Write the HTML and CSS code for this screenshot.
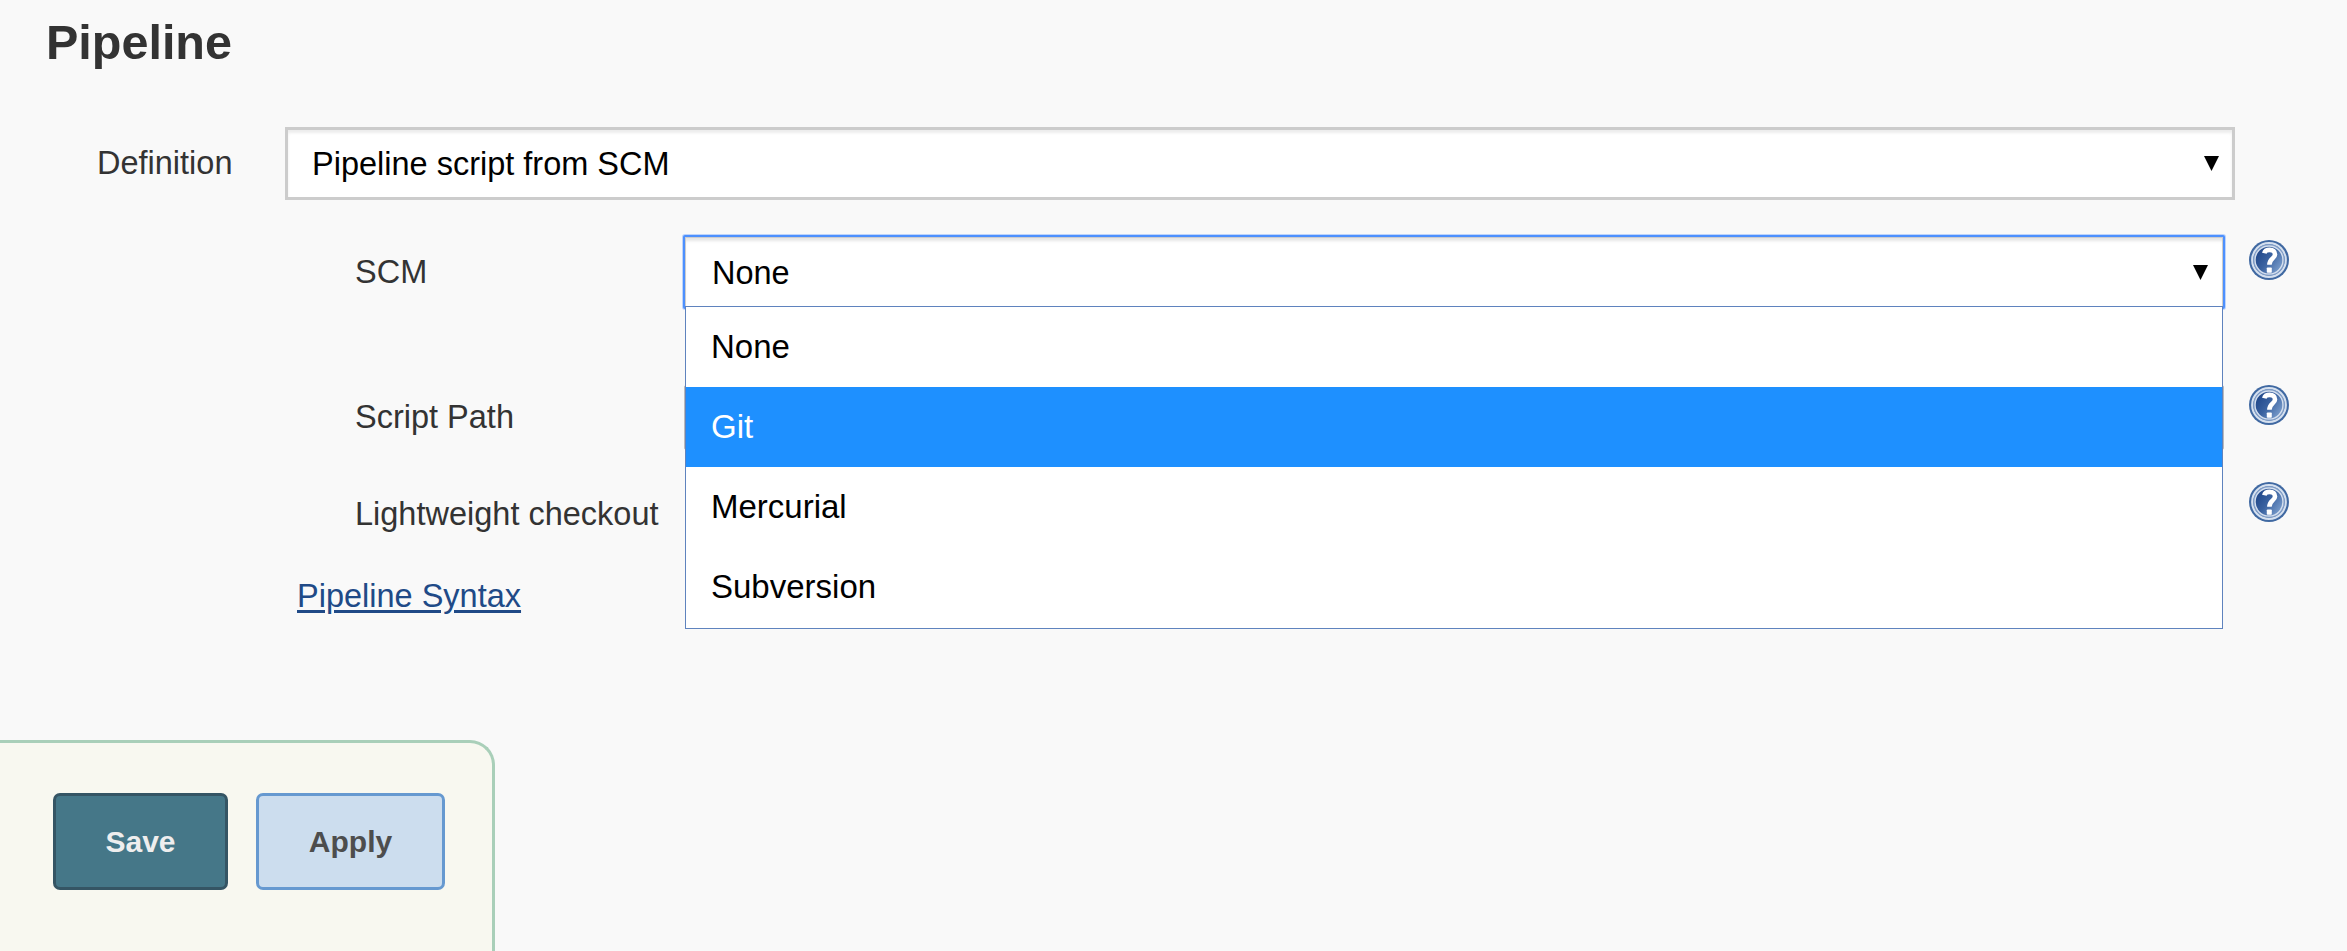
FILE: index.html
```html
<!DOCTYPE html>
<html lang="en">
<head>
<meta charset="utf-8">
<title>Pipeline</title>
<link rel="stylesheet" href="styles.css">
</head>
<body>
<svg class="defs" width="0" height="0" aria-hidden="true">
  <defs>
    <linearGradient id="ball" x1="0" y1="0.2" x2="1" y2="0.9">
      <stop offset="0" stop-color="#1d4487"/>
      <stop offset="0.45" stop-color="#3a62a0"/>
      <stop offset="1" stop-color="#86a8d4"/>
    </linearGradient>
    <symbol id="help" viewBox="0 0 40 40">
      <circle cx="20" cy="20" r="20" fill="#4069a2"/>
      <circle cx="20" cy="20" r="16.8" fill="none" stroke="#d5e0ef" stroke-width="2.2"/>
      <circle cx="20" cy="20" r="15.2" fill="none" stroke="#7f9cc6" stroke-width="1.4"/>
      <circle cx="20" cy="20" r="14" fill="url(#ball)" stroke="#d5e0ef" stroke-width="1.4"/>
      <path d="M15.3 13.2C15.8 10.8 18 9.9 20.8 9.9C24 9.9 26 11.6 26 14.4C26 18.6 20.4 18.4 20.4 24.8" fill="none" stroke="#fff" stroke-width="4.6"/>
      <rect x="17.8" y="27.4" width="5" height="5.4" rx="0.8" fill="#fff"/>
    </symbol>
  </defs>
</svg>
<main class="page">
  <h1 class="title">Pipeline</h1>
  <form class="form">
    <div class="row definition">
      <label class="label">Definition</label>
      <div class="select">
        <span>Pipeline script from SCM</span>
        <svg class="arrow" viewBox="0 0 15 15"><path d="M0 0H15L7.5 15Z"/></svg>
      </div>
    </div>
    <div class="row scm">
      <label class="label nested">SCM</label>
      <div class="field">
        <div class="select focused">
          <span>None</span>
          <svg class="arrow" viewBox="0 0 15 15"><path d="M0 0H15L7.5 15Z"/></svg>
        </div>
        <ul class="menu">
          <li class="option">None</li>
          <li class="option active">Git</li>
          <li class="option">Mercurial</li>
          <li class="option">Subversion</li>
        </ul>
      </div>
      <svg class="help"><use href="#help"/></svg>
    </div>
    <div class="row script-path">
      <label class="label nested">Script Path</label>
      <div class="textbox"></div>
      <svg class="help"><use href="#help"/></svg>
    </div>
    <div class="row lightweight">
      <label class="label nested">Lightweight checkout</label>
      <div class="spacer"></div>
      <svg class="help"><use href="#help"/></svg>
    </div>
    <a class="link">Pipeline Syntax</a>
  </form>
  <footer class="actions">
    <button class="btn save">Save</button>
    <button class="btn apply">Apply</button>
  </footer>
</main>
</body>
</html>
```

FILE: styles.css
```css
* { box-sizing: border-box; }
body {
  margin: 0;
  background: #f9f9f9;
  color: #333;
  font: 32.5px/40px "Liberation Sans", Arial, sans-serif;
}
.defs { position: absolute; }
.page {
  display: flex;
  flex-direction: column;
  width: 2347px;
  height: 951px;
  overflow: hidden;
}
.title {
  flex: none;
  margin: 0;
  padding: 12px 0 0 46px;
  height: 127px;
  font-size: 48.5px;
  line-height: 60px;
  font-weight: bold;
}
.form { display: flex; flex-direction: column; flex: none; height: 613px; }
.row { display: flex; align-items: flex-start; flex: none; }
.label { width: 285px; padding: 16px 0 0 97px; white-space: nowrap; flex: none; }
.label.nested { width: 683px; padding: 17px 0 0 355px; }
.definition { height: 108px; }
.scm { height: 150px; }
.script-path { height: 97px; }
.lightweight { height: 94px; }
.script-path .label, .lightweight .label { padding-top: 12px; }
.select {
  display: flex;
  align-items: flex-start;
  justify-content: space-between;
  width: 1950px;
  height: 73px;
  padding: 14px 13px 0 24px;
  border: 3px solid #ccc;
  background: #fff;
  box-shadow: inset 0 3px 3px rgba(0, 0, 0, 0.075);
  color: #000;
}
.arrow { width: 15px; height: 15px; margin-top: 12px; }
.field { position: relative; width: 1542px; }
.select.focused {
  width: 1542px;
  height: 74px;
  padding: 16px 15px 0 27px;
  border: 2px solid #4d90fe;
  border-radius: 2px;
  box-shadow: 0 0 0 1px rgba(77, 144, 254, 0.35), inset 0 0 0 1px #ccc, inset 0 4px 3px rgba(0, 0, 0, 0.1);
}
.menu {
  position: absolute;
  z-index: 1;
  top: 71px;
  left: 2px;
  width: 1538px;
  height: 323px;
  margin: 0;
  padding: 0;
  list-style: none;
  background: #fff;
  border: 1px solid #5f83be;
  color: #000;
  font-size: 33px;
}
.option { height: 80px; padding: 20px 0 0 25px; }
.option.active { background: #1e90ff; color: #fff; }
.textbox { width: 1540px; height: 65px; margin: 0 1px; border: 1px solid #bbb; background: #fff; border-radius: 2px; }
.spacer { width: 1542px; }
.help { width: 40px; height: 40px; margin: 5px 0 0 24px; }
.script-path .help, .lightweight .help { margin-top: 0; }
.link {
  width: max-content;
  margin-left: 297px;
  color: #204a87;
  text-decoration: underline;
  text-decoration-thickness: 3px;
  text-underline-offset: 3px;
}
.actions {
  display: flex;
  gap: 28px;
  width: 495px;
  height: 240px;
  flex: none;
  padding: 50px 0 0 53px;
  background: #f8f8f0;
  border: solid #a9cfb9;
  border-width: 3px 3px 0 0;
  border-top-right-radius: 25px;
}
.btn {
  width: 175px;
  height: 97px;
  padding: 0;
  border: 3px solid #355564;
  border-radius: 7px;
  background: #457788;
  color: #eee;
  font: bold 30px/40px "Liberation Sans", Arial, sans-serif;
}
.btn.apply { width: 189px; border-color: #6699d0; background: #ccddee; color: #4d4d4d; }
```
